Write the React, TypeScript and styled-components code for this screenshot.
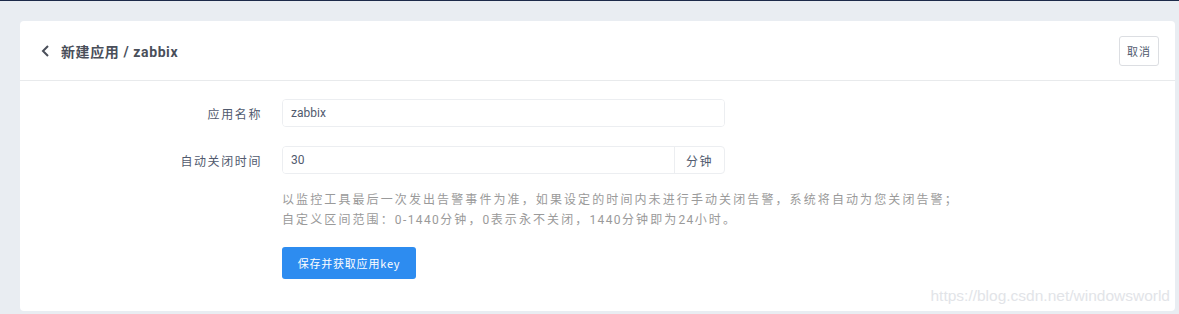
import styled, { createGlobalStyle } from "styled-components";

const GlobalStyle = createGlobalStyle`
  html, body {
    margin: 0;
    padding: 0;
    background: #e9edf2;
    font-family: Roboto, "Noto Sans CJK SC", sans-serif;
  }
`;

const Page = styled.div`
  border-top: 1px solid #1c2a4a;
  padding: 20px 4px 3px 20px;
  position: relative;
  height: 313px;
  box-sizing: border-box;
`;

const Card = styled.div`
  background: #fff;
  border-radius: 4px;
  height: 290px;
`;

const Header = styled.div`
  height: 59px;
  display: flex;
  align-items: center;
  justify-content: space-between;
  padding: 0 16px 0 20px;
  border-bottom: 1px solid #e8eaec;
`;

const Title = styled.div`
  display: flex;
  align-items: center;
  gap: 9px;
  font-size: 14px;
  font-weight: 700;
  color: #4a4f5a;
  letter-spacing: 0.6px;
`;

const Back = styled.svg`
  width: 12px;
  height: 14px;
`;

const CancelButton = styled.button`
  width: 40px;
  height: 30px;
  padding: 0;
  background: #fff;
  border: 1px solid #dcdee2;
  border-radius: 3px;
  font-family: "Noto Sans CJK SC", sans-serif;
  font-size: 11px;
  letter-spacing: 1px;
  color: #515a6e;
`;

const Body = styled.div`
  padding-top: 18px;
`;

const FormItem = styled.div<{ $gap?: number }>`
  display: flex;
  align-items: center;
  margin-bottom: ${(p) => p.$gap ?? 19}px;
`;

const Label = styled.label`
  width: 242px;
  margin-right: 20px;
  text-align: right;
  font-family: "Noto Sans CJK SC", sans-serif;
  font-size: 12px;
  letter-spacing: 1.6px;
  color: #515a6e;
`;

const InputGroup = styled.div`
  width: 443px;
  height: 28px;
  display: flex;
  border: 1px solid #eceef1;
  border-radius: 4px;
  box-sizing: border-box;
  overflow: hidden;
`;

const Input = styled.input`
  flex: 1;
  min-width: 0;
  border: none;
  outline: none;
  padding: 0 8px;
  font-family: Roboto, sans-serif;
  font-size: 12px;
  color: #515a6e;
  background: #fff;
`;

const Addon = styled.span`
  width: 49px;
  display: flex;
  align-items: center;
  justify-content: center;
  border-left: 1px solid #eceef1;
  font-family: "Noto Sans CJK SC", sans-serif;
  font-size: 12px;
  letter-spacing: 1.5px;
  color: #515a6e;
`;

const Content = styled.div`
  margin-left: 262px;
`;

const Help = styled.p`
  margin: -2px 0 0;
  font-family: "Noto Sans CJK SC", Roboto, sans-serif;
  font-size: 12px;
  line-height: 20px;
  letter-spacing: 2.1px;
  color: #9a9a9a;
`;

const Num = styled.span`
  font-family: Roboto, sans-serif;
  letter-spacing: 1.4px;
`;

const PrimaryButton = styled.button`
  margin-top: 17px;
  width: 134px;
  height: 32px;
  padding: 0;
  border: none;
  border-radius: 3px;
  background: #2d8cf0;
  color: #fff;
  font-family: "Noto Sans CJK SC", Roboto, sans-serif;
  font-size: 11px;
  letter-spacing: 0.8px;
`;

const Watermark = styled.div`
  position: absolute;
  right: 9px;
  bottom: 8px;
  font-family: "Liberation Sans", sans-serif;
  font-size: 15.5px;
  color: #e2e4e8;
`;

export default function App() {
  return (
    <>
      <GlobalStyle />
      <Page>
        <Card>
          <Header>
            <Title>
              <Back viewBox="0 0 12 14">
                <path d="M8 2 L3 7 L8 12" fill="none" stroke="#4a4f5a" strokeWidth="2" />
              </Back>
              <span>新建应用 / zabbix</span>
            </Title>
            <CancelButton>取消</CancelButton>
          </Header>
          <Body>
            <FormItem>
              <Label>应用名称</Label>
              <InputGroup>
                <Input defaultValue="zabbix" />
              </InputGroup>
            </FormItem>
            <FormItem $gap={17}>
              <Label>自动关闭时间</Label>
              <InputGroup>
                <Input defaultValue="30" />
                <Addon>分钟</Addon>
              </InputGroup>
            </FormItem>
            <Content>
              <Help>
                以监控工具最后一次发出告警事件为准，如果设定的时间内未进行手动关闭告警，系统将自动为您关闭告警；
                <br />
                自定义区间范围：<Num>0-1440</Num>分钟，<Num>0</Num>表示永不关闭，<Num>1440</Num>分钟即为<Num>24</Num>小时。
              </Help>
              <PrimaryButton>保存并获取应用key</PrimaryButton>
            </Content>
          </Body>
        </Card>
        <Watermark>https://blog.csdn.net/windowsworld</Watermark>
      </Page>
    </>
  );
}
